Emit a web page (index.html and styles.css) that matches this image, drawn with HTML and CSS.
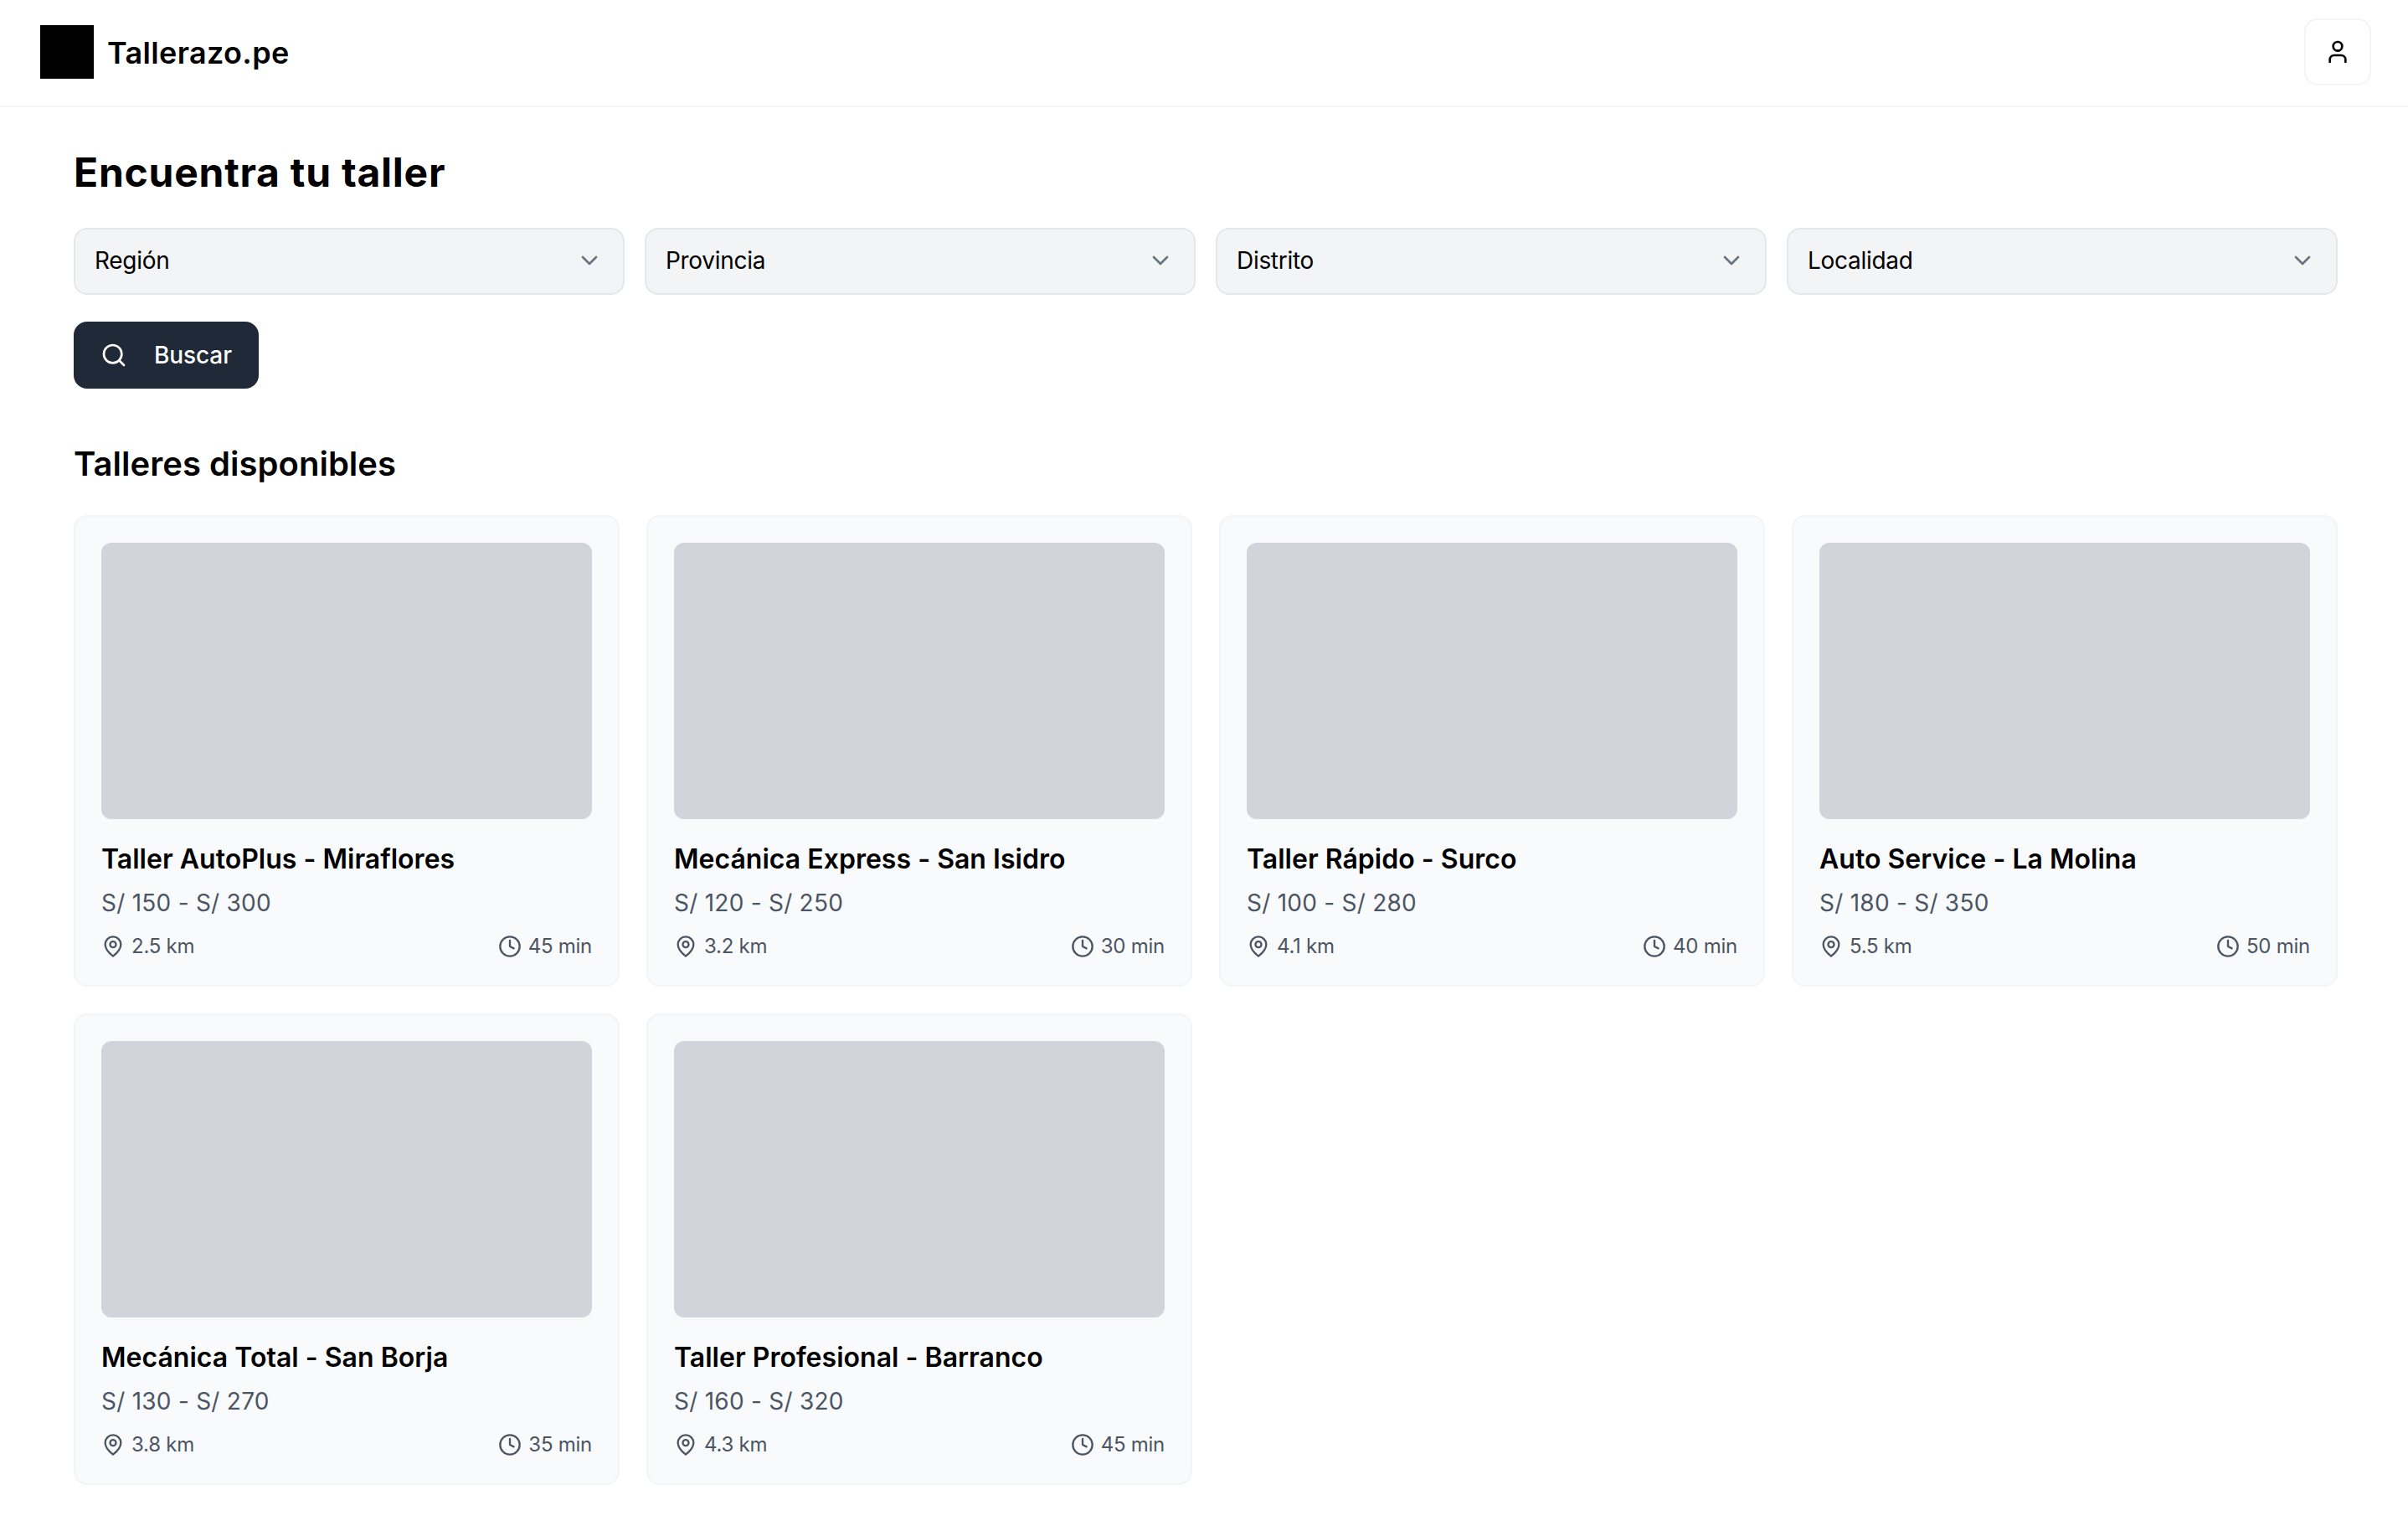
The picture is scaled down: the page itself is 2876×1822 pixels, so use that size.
FILE: index.html
```html
<!DOCTYPE html>
<html lang="es">
<head>
<meta charset="utf-8">
<title>Tallerazo.pe</title>
<link rel="stylesheet" href="styles.css">
</head>
<body>
<header class="topbar">
  <div class="brand"><div class="logo"></div><span class="brand-name">Tallerazo.pe</span></div>
  <button class="user-btn" aria-label="Usuario">
    <svg class="user-icon" viewBox="0 0 24 24" fill="none" stroke="#000" stroke-width="2" stroke-linecap="round" stroke-linejoin="round"><path d="M19 21v-2a4 4 0 0 0-4-4H9a4 4 0 0 0-4 4v2"/><circle cx="12" cy="7" r="4"/></svg>
  </button>
</header>
<main class="page">
  <h1 class="title">Encuentra tu taller</h1>
  <div class="filters">
    <div class="select"><span>Región</span><svg class="chev" viewBox="0 0 24 24"><path d="m6 9 6 6 6-6"/></svg></div>
    <div class="select"><span>Provincia</span><svg class="chev" viewBox="0 0 24 24"><path d="m6 9 6 6 6-6"/></svg></div>
    <div class="select"><span>Distrito</span><svg class="chev" viewBox="0 0 24 24"><path d="m6 9 6 6 6-6"/></svg></div>
    <div class="select"><span>Localidad</span><svg class="chev" viewBox="0 0 24 24"><path d="m6 9 6 6 6-6"/></svg></div>
  </div>
  <button class="search-btn">
    <svg class="search-icon" viewBox="0 0 24 24"><circle cx="11" cy="11" r="8"/><path d="m21 21-4.3-4.3"/></svg>
    <span>Buscar</span>
  </button>
  <h2 class="subtitle">Talleres disponibles</h2>
  <div class="grid">
    <article class="card"><div class="thumb"></div><h3 class="name">Taller AutoPlus - Miraflores</h3><p class="price">S/ 150 - S/ 300</p><div class="meta"><span class="meta-item"><svg class="mi" viewBox="0 0 24 24"><path d="M20 10c0 5-5.500 10-8 12-2.500-2-8-7-8-12a8 8 0 0 1 16 0Z"/><circle cx="12" cy="10" r="3"/></svg>2.5 km</span><span class="meta-item"><svg class="mi" viewBox="0 0 24 24"><circle cx="12" cy="12" r="10"/><path d="M12 6v6l4 2"/></svg>45 min</span></div></article>
    <article class="card"><div class="thumb"></div><h3 class="name">Mecánica Express - San Isidro</h3><p class="price">S/ 120 - S/ 250</p><div class="meta"><span class="meta-item"><svg class="mi" viewBox="0 0 24 24"><path d="M20 10c0 5-5.500 10-8 12-2.500-2-8-7-8-12a8 8 0 0 1 16 0Z"/><circle cx="12" cy="10" r="3"/></svg>3.2 km</span><span class="meta-item"><svg class="mi" viewBox="0 0 24 24"><circle cx="12" cy="12" r="10"/><path d="M12 6v6l4 2"/></svg>30 min</span></div></article>
    <article class="card"><div class="thumb"></div><h3 class="name">Taller Rápido - Surco</h3><p class="price">S/ 100 - S/ 280</p><div class="meta"><span class="meta-item"><svg class="mi" viewBox="0 0 24 24"><path d="M20 10c0 5-5.500 10-8 12-2.500-2-8-7-8-12a8 8 0 0 1 16 0Z"/><circle cx="12" cy="10" r="3"/></svg>4.1 km</span><span class="meta-item"><svg class="mi" viewBox="0 0 24 24"><circle cx="12" cy="12" r="10"/><path d="M12 6v6l4 2"/></svg>40 min</span></div></article>
    <article class="card"><div class="thumb"></div><h3 class="name">Auto Service - La Molina</h3><p class="price">S/ 180 - S/ 350</p><div class="meta"><span class="meta-item"><svg class="mi" viewBox="0 0 24 24"><path d="M20 10c0 5-5.500 10-8 12-2.500-2-8-7-8-12a8 8 0 0 1 16 0Z"/><circle cx="12" cy="10" r="3"/></svg>5.5 km</span><span class="meta-item"><svg class="mi" viewBox="0 0 24 24"><circle cx="12" cy="12" r="10"/><path d="M12 6v6l4 2"/></svg>50 min</span></div></article>
    <article class="card"><div class="thumb"></div><h3 class="name">Mecánica Total - San Borja</h3><p class="price">S/ 130 - S/ 270</p><div class="meta"><span class="meta-item"><svg class="mi" viewBox="0 0 24 24"><path d="M20 10c0 5-5.500 10-8 12-2.500-2-8-7-8-12a8 8 0 0 1 16 0Z"/><circle cx="12" cy="10" r="3"/></svg>3.8 km</span><span class="meta-item"><svg class="mi" viewBox="0 0 24 24"><circle cx="12" cy="12" r="10"/><path d="M12 6v6l4 2"/></svg>35 min</span></div></article>
    <article class="card"><div class="thumb"></div><h3 class="name">Taller Profesional - Barranco</h3><p class="price">S/ 160 - S/ 320</p><div class="meta"><span class="meta-item"><svg class="mi" viewBox="0 0 24 24"><path d="M20 10c0 5-5.500 10-8 12-2.500-2-8-7-8-12a8 8 0 0 1 16 0Z"/><circle cx="12" cy="10" r="3"/></svg>4.3 km</span><span class="meta-item"><svg class="mi" viewBox="0 0 24 24"><circle cx="12" cy="12" r="10"/><path d="M12 6v6l4 2"/></svg>45 min</span></div></article>
  </div>
</main>
</body>
</html>
```
FILE: styles.css
```css
* { box-sizing: border-box; }
html, body { margin: 0; padding: 0; background: #fff; }
body { font-family: "Inter", "Liberation Sans", sans-serif; color: #000; }
h1, h2, h3, p { margin: 0; }
.topbar { height: 128px; display: flex; align-items: center; justify-content: space-between; padding: 0 44px 2px 48px; border-bottom: 2px solid #f3f4f6; }
.brand { display: flex; align-items: center; gap: 16px; }
.logo { width: 64px; height: 64px; background: #000; }
.brand-name { font-size: 36px; font-weight: 600; letter-spacing: .35px; padding-top: 2px; }
.user-btn { width: 80px; height: 80px; border: 2px solid #f3f4f6; border-radius: 16px; background: #fff; display: flex; align-items: center; justify-content: center; padding: 0; }
.user-icon { width: 32px; height: 32px; }
.page { padding: 48px 84px 46px 88px; }
.title { font-size: 48px; line-height: 60px; font-weight: 700; letter-spacing: .75px; }
.filters { display: grid; grid-template-columns: repeat(4, 1fr); gap: 24px; margin-top: 36px; }
.select { height: 80px; background: #f3f4f6; border: 2px solid #e5e7eb; border-radius: 16px; display: flex; align-items: center; justify-content: space-between; padding: 0 24px 2px 23px; font-size: 28px; letter-spacing: -.3px; }
.chev { width: 32px; height: 32px; fill: none; stroke: #6b7280; stroke-width: 2; stroke-linecap: round; stroke-linejoin: round; }
.search-btn { margin-top: 32px; height: 80px; width: 221px; background: #1f2937; color: #fff; border: 0; border-radius: 16px; display: flex; align-items: center; gap: 32px; padding: 0 32px; font: inherit; font-size: 28px; font-weight: 500; letter-spacing: -.1px; }
.search-icon { width: 32px; height: 32px; fill: none; stroke: #fff; stroke-width: 2; stroke-linecap: round; stroke-linejoin: round; }
.subtitle { margin-top: 66px; font-size: 40px; line-height: 48px; font-weight: 600; letter-spacing: .03px; }
.grid { display: grid; grid-template-columns: repeat(4, 1fr); gap: 32px; margin-top: 37px; }
.card { height: 563px; padding: 31px; background: #f9fafb; border: 2px solid #f3f4f6; border-radius: 16px; }
.thumb { height: 330px; background: #d1d5db; border-radius: 12px; }
.name { margin-top: 28px; font-size: 32px; line-height: 40px; font-weight: 600; letter-spacing: .02px; }
.price { margin-top: 12px; font-size: 28px; line-height: 40px; color: #4b5563; letter-spacing: .25px; }
.meta { margin-top: 16px; display: flex; justify-content: space-between; font-size: 24px; line-height: 32px; color: #4b5563; letter-spacing: -.25px; }
.meta-item { display: flex; align-items: center; gap: 8px; }
.mi { width: 28px; height: 28px; fill: none; stroke: #4b5563; stroke-width: 2; stroke-linecap: round; stroke-linejoin: round; }
```
